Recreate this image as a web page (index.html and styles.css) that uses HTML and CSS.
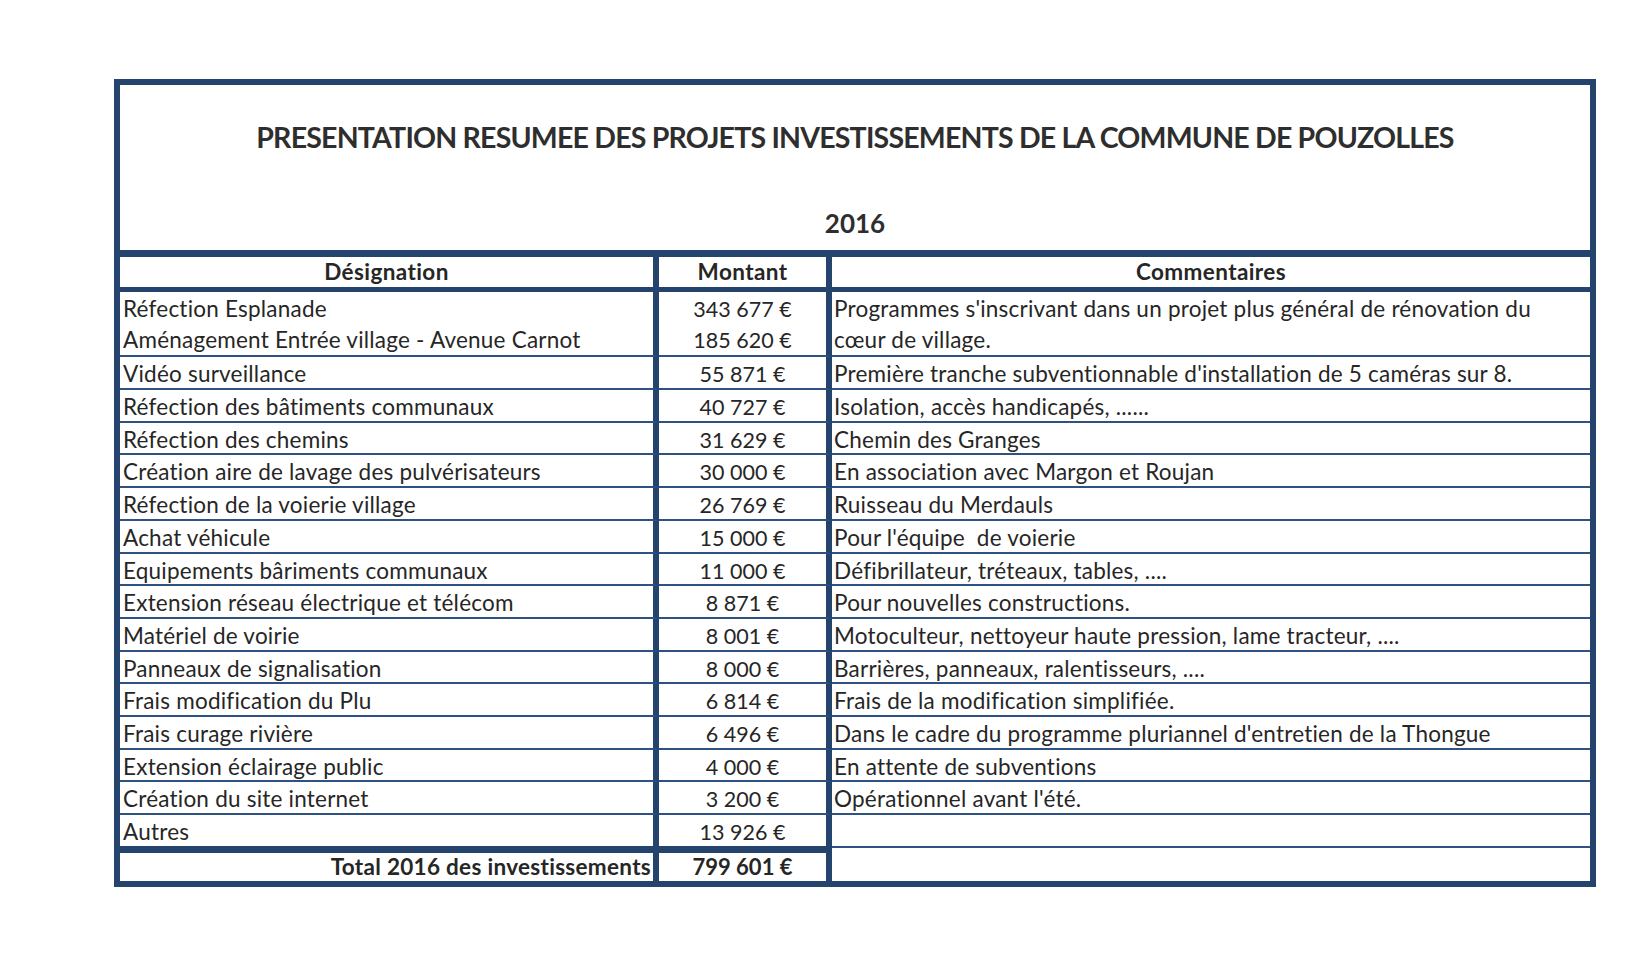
FILE: index.html
```html
<!DOCTYPE html>
<html lang="fr">
<head>
<meta charset="utf-8">
<title>Projets investissements 2016 - Pouzolles</title>
<link rel="stylesheet" href="styles.css">
</head>
<body>
<div class="sheet">
  <div class="title-block">
    <div class="title">PRESENTATION RESUMEE DES PROJETS INVESTISSEMENTS DE LA COMMUNE DE POUZOLLES</div>
    <div class="year">2016</div>
  </div>
  <div class="row head">
    <div class="c1">Désignation</div>
    <div class="c2">Montant</div>
    <div class="c3">Commentaires</div>
  </div>
  <div class="row double">
    <div class="c1">Réfection Esplanade<br>Aménagement Entrée village - Avenue Carnot</div>
    <div class="c2">343 677 €<br>185 620 €</div>
    <div class="c3">Programmes s'inscrivant dans un projet plus général de rénovation du<br>cœur de village.</div>
  </div>
  <div class="row"><div class="c1">Vidéo surveillance</div><div class="c2">55 871 €</div><div class="c3">Première tranche subventionnable d'installation de 5 caméras sur 8.</div></div>
  <div class="row"><div class="c1">Réfection des bâtiments communaux</div><div class="c2">40 727 €</div><div class="c3">Isolation, accès handicapés, ......</div></div>
  <div class="row"><div class="c1">Réfection des chemins</div><div class="c2">31 629 €</div><div class="c3">Chemin des Granges</div></div>
  <div class="row"><div class="c1">Création aire de lavage des pulvérisateurs</div><div class="c2">30 000 €</div><div class="c3">En association avec Margon et Roujan</div></div>
  <div class="row"><div class="c1">Réfection de la voierie village</div><div class="c2">26 769 €</div><div class="c3">Ruisseau du Merdauls</div></div>
  <div class="row"><div class="c1">Achat véhicule</div><div class="c2">15 000 €</div><div class="c3">Pour l'équipe &nbsp;de voierie</div></div>
  <div class="row"><div class="c1">Equipements bâriments communaux</div><div class="c2">11 000 €</div><div class="c3">Défibrillateur, tréteaux, tables, ....</div></div>
  <div class="row"><div class="c1">Extension réseau électrique et télécom</div><div class="c2">8 871 €</div><div class="c3">Pour nouvelles constructions.</div></div>
  <div class="row"><div class="c1">Matériel de voirie</div><div class="c2">8 001 €</div><div class="c3">Motoculteur, nettoyeur haute pression, lame tracteur, ....</div></div>
  <div class="row"><div class="c1">Panneaux de signalisation</div><div class="c2">8 000 €</div><div class="c3">Barrières, panneaux, ralentisseurs, ....</div></div>
  <div class="row"><div class="c1">Frais modification du Plu</div><div class="c2">6 814 €</div><div class="c3">Frais de la modification simplifiée.</div></div>
  <div class="row"><div class="c1">Frais curage rivière</div><div class="c2">6 496 €</div><div class="c3">Dans le cadre du programme pluriannel d'entretien de la Thongue</div></div>
  <div class="row"><div class="c1">Extension éclairage public</div><div class="c2">4 000 €</div><div class="c3">En attente de subventions</div></div>
  <div class="row"><div class="c1">Création du site internet</div><div class="c2">3 200 €</div><div class="c3">Opérationnel avant l'été.</div></div>
  <div class="row last"><div class="c1">Autres</div><div class="c2">13 926 €</div><div class="c3"></div></div>
  <div class="row total"><div class="c1">Total 2016 des investissements</div><div class="c2">799 601 €</div><div class="c3"></div></div>
</div>
</body>
</html>
```
FILE: styles.css
```css
html, body {
  margin: 0;
  padding: 0;
  background: #ffffff;
}

body {
  font-family: Lato, "Open Sans", "Liberation Sans", sans-serif;
  color: #262626;
}

.sheet {
  box-sizing: border-box;
  width: 1482px;
  margin: 79px 0 0 114px;
  border: 6px solid #24436d;
}

.title-block {
  height: 165px;
  border-bottom: 7px solid #24436d;
  box-sizing: content-box;
  text-align: center;
  font-weight: 700;
  color: #2e2e2e;
}

.title {
  padding-top: 35px;
  font-size: 28.5px;
  line-height: 34px;
  letter-spacing: -0.8px;
}

.year {
  margin-top: 54px;
  font-size: 26px;
  line-height: 31px;
}

.row {
  display: grid;
  grid-template-columns: 539px 173px 758px;
  font-size: 22.5px;
  letter-spacing: 0.22px;
}

.row > div {
  box-sizing: border-box;
  height: 32.7px;
  padding-top: 2px;
  line-height: 30.7px;
  border-bottom: 2px solid #2f5283;
  white-space: nowrap;
}

.row .c1 {
  padding-left: 3px;
  border-right: 6px solid #24436d;
}

.row .c2 {
  text-align: center;
  border-right: 6px solid #24436d;
  font-size: 21.5px;
  letter-spacing: 0;
}

.row .c3 {
  padding-left: 2px;
}

.row.head > div {
  height: 35px;
  padding-top: 0;
  line-height: 30px;
  font-size: 22.5px;
  letter-spacing: 0.4px;
  font-weight: 700;
  text-align: center;
  border-bottom: 5px solid #24436d;
  padding-left: 0;
}

.row.double > div {
  height: 65.4px;
}

.row.last .c1,
.row.last .c2 {
  height: 37.7px;
  border-bottom: 7px solid #24436d;
}

.row.last .c3 {
  height: 32.7px;
  align-self: start;
}

.row.total > div {
  height: 28px;
  padding-top: 0;
  line-height: 28px;
  border-bottom: none;
  font-weight: 700;
}

.row.total .c1 {
  text-align: right;
  padding-right: 2px;
  font-size: 22.5px;
  letter-spacing: 0.3px;
}

.row.total .c2 {
  font-size: 22px;
}
```
